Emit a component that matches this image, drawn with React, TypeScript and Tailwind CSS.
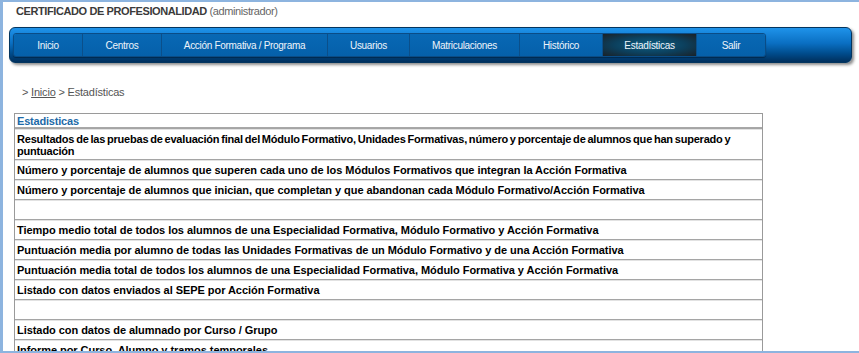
import React from 'react';

const menu = [
    { label: 'Inicio', w: 'w-[69px]' },
    { label: 'Centros', w: 'w-[79px]' },
    { label: 'Acción Formativa / Programa', w: 'w-[166px]' },
    { label: 'Usuarios', w: 'w-[82px]' },
    { label: 'Matriculaciones', w: 'w-[110px]' },
    { label: 'Histórico', w: 'w-[83px]' },
    { label: 'Estadísticas', w: 'w-[94px]', active: true },
    { label: 'Salir', w: 'w-[68px]' },
];

// filas de la tabla; '' = fila vacía
const rows: React.ReactNode[] = [
    <span className="tracking-[-0.2px] [word-spacing:-1px]">
        Resultados de las pruebas de evaluación final del Módulo Formativo, Unidades Formativas, número y porcentaje de alumnos que han superado y
        <br />
        puntuación
    </span>,
    'Número y porcentaje de alumnos que superen cada uno de los Módulos Formativos que integran la Acción Formativa',
    'Número y porcentaje de alumnos que inician, que completan y que abandonan cada Módulo Formativo/Acción Formativa',
    '',
    'Tiempo medio total de todos los alumnos de una Especialidad Formativa, Módulo Formativo y Acción Formativa',
    'Puntuación media por alumno de todas las Unidades Formativas de un Módulo Formativo y de una Acción Formativa',
    'Puntuación media total de todos los alumnos de una Especialidad Formativa, Módulo Formativa y Acción Formativa',
    'Listado con datos enviados al SEPE por Acción Formativa',
    '',
    'Listado con datos de alumnado por Curso / Grupo',
    'Informe por Curso, Alumno y tramos temporales',
];

const App: React.FC = () => {
    return (
        <div className="w-[859px] h-[353px] overflow-hidden bg-white border-l-[3px] border-t-2 border-b-2 border-[#8db4df] font-['Liberation_Sans',Arial,sans-serif]">
            <div className="pl-[13px] pt-[2px] text-[11px] leading-[14px] tracking-[-0.4px] text-[#3a3a3a]">
                <span className="font-bold">CERTIFICADO DE PROFESIONALIDAD</span>{' '}
                <span className="text-[#666]">(administrador)</span>
            </div>

            {/* barra de navegación */}
            <div className="mt-[9px] ml-[6px] mr-[7px] h-[36px] rounded-[6px] border border-[#03355f] bg-[linear-gradient(to_bottom,#1f93ea_0%,#0a6fc2_45%,#004c8c_75%,#002f5c_100%)] shadow-[2px_2px_3px_rgba(0,0,0,0.45)] pl-[3px] pt-[5px]">
                <div className="flex h-[24px] w-max rounded-[3px] border border-[#0a4c86] overflow-hidden shadow-[0_1px_1px_rgba(0,0,0,0.35)]">
                    {menu.map((m, i) => (
                        <div
                            key={m.label}
                            className={
                                m.w +
                                ' flex items-center justify-center text-[10px] tracking-[-0.3px] text-[#eef4fa] ' +
                                (i < menu.length - 1 ? 'border-r border-[#0b4f8a] ' : '') +
                                (m.active
                                    ? 'bg-[radial-gradient(ellipse_at_center,#0d6086_0%,#0c3f5c_55%,#1a2127_100%)]'
                                    : 'bg-[linear-gradient(to_bottom,#0868b4,#0560aa)]')
                            }
                        >
                            {m.label}
                        </div>
                    ))}
                </div>
            </div>

            {/* migas de pan */}
            <div className="mt-[22px] pl-[19px] text-[11px] leading-[14px] tracking-[-0.2px] text-[#555]">
                &gt; <span className="underline">Inicio</span> &gt; Estadísticas
            </div>

            {/* tabla de estadísticas */}
            <div className="mt-[14px] ml-[11px] w-[749px] border-l border-r border-t border-[#9a9a9a] text-[11px] leading-[12px]">
                <div className="px-[2px] h-[14px] flex items-center font-bold tracking-[-0.2px] text-[#1d6aa8] border-b border-[#a8a8a8]">
                    Estadisticas
                </div>
                {rows.map((r, i) => (
                    <div
                        key={i}
                        className={
                            'border-t border-[#a5a5a5] shadow-[inset_0_1px_0_#e2e2e2] px-[2px] pt-[4px] min-h-[20px] font-bold tracking-[-0.05px] text-black whitespace-nowrap ' +
                            (i === 0 ? 'pb-[2px]' : 'pb-[3px]')
                        }
                    >
                        {r}
                    </div>
                ))}
            </div>
        </div>
    );
};

export default App;
